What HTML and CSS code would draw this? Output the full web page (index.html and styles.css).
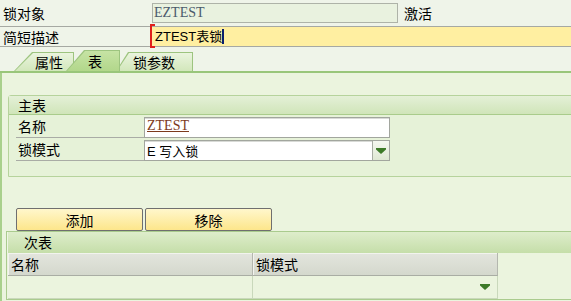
FILE: index.html
```html
<!DOCTYPE html>
<html lang="zh">
<head>
  <meta charset="UTF-8">
  <title>锁对象 EZTEST</title>
  <link rel="stylesheet" href="styles.css">
</head>
<body>
  <!-- Header fields -->
  <div class="row r1">
    <span class="lbl">锁对象</span>
    <span class="field ro">EZTEST</span>
    <span class="status">激活</span>
  </div>
  <div class="row r2">
    <span class="lbl">简短描述</span>
    <span class="field req"><i class="bracket"></i>ZTEST表锁<i class="caret"></i></span>
  </div>

  <!-- Tab strip -->
  <div class="tabs">
    <div class="tab t1"><span>属性</span></div>
    <div class="tab t2 on"><span>表</span></div>
    <div class="tab t3"><span>锁参数</span></div>
  </div>

  <div class="panel">
    <!-- Primary table -->
    <div class="group">
      <div class="ghead">主表</div>
      <div class="gbody">
        <div class="frow">
          <span class="flbl">名称</span>
          <span class="inp link">ZTEST</span>
        </div>
        <div class="frow">
          <span class="flbl">锁模式</span>
          <span class="inp sel">E 写入锁
            <b class="ddbtn"><svg width="10" height="6" viewBox="0 0 10 6"><path d="M0 0h10v1.5L5 6 0 1.5z" fill="#3d7a28"/></svg></b>
          </span>
        </div>
      </div>
    </div>

    <div class="btns">
      <button class="btn">添加</button>
      <button class="btn">移除</button>
    </div>

    <!-- Secondary tables -->
    <div class="group sub">
      <div class="ghead">次表</div>
      <div class="grid">
        <div class="th">名称</div>
        <div class="th">锁模式</div>
        <div class="td"></div>
        <div class="td dd"><svg width="10" height="6" viewBox="0 0 10 6"><path d="M0 0h10v1.5L5 6 0 1.5z" fill="#3d7a28"/></svg></div>
      </div>
    </div>
  </div>
</body>
</html>
```

FILE: styles.css
```css
/* Base */
body {
  margin: 0;
  width: 571px;
  height: 301px;
  overflow: hidden;
  background: #eff4e9;
  font: 14px "Noto Sans CJK SC", sans-serif;
  color: #000;
}

/* Header rows */
.row {
  display: flex;
  align-items: center;
  border-bottom: 1px solid #a6a9a3;
}

.r1 {
  height: 26px;
}

.r2 {
  height: 19px;
}

.lbl {
  width: 150px;
  padding-left: 3px;
  box-sizing: border-box;
}

.field.ro {
  margin-left: 2px;
  width: 246px;
  height: 20px;
  box-sizing: border-box;
  border: 1px solid #aeb3a8;
  background: #e9f2df;
  font: 14px "Liberation Serif", serif;
  color: #4b5b6c;
  line-height: 18px;
  padding-left: 1px;
}

.status {
  margin-left: 6px;
}

.field.req {
  position: relative;
  flex: 1;
  align-self: stretch;
  background: #ffefa1;
  padding-left: 5px;
  font: 13px "Liberation Sans", "Noto Sans CJK SC", sans-serif;
  line-height: 19px;
}

.bracket {
  position: absolute;
  left: 0;
  top: -3px;
  bottom: -2px;
  width: 3px;
  border: 2px solid #e0201c;
  border-right: none;
}

.caret {
  display: inline-block;
  width: 2px;
  height: 15px;
  background: #0c1f6b;
  vertical-align: -3px;
}

/* Tabs */
.tabs {
  display: flex;
  align-items: flex-end;
  height: 24px;
  padding-left: 14px;
  border-bottom: 2px solid #99c67a;
}

.tab {
  position: relative;
  height: 19px;
  padding: 1px 1px 0 1px;
  box-sizing: border-box;
  background: #9dc47f;
  clip-path: polygon(var(--s) 0, 100% 0, 100% 100%, 0 100%);
}

.tab span {
  display: block;
  height: 100%;
  line-height: 18px;
  background: linear-gradient(#eaf4de, #d2e7bb);
  clip-path: polygon(var(--s) 0, 100% 0, 100% 100%, 0 100%);
}

.t1 {
  --s: 18px;
  width: 60px;
}

.t1 span {
  padding-left: 20px;
}

.t2 {
  --s: 18px;
  width: 54px;
  height: 21px;
  margin-left: -8px;
  z-index: 2;
}

.t2 span {
  padding-left: 21px;
  line-height: 20px;
  background: linear-gradient(#c6e3a4, #b2d78b);
}

.t3 {
  --s: 12px;
  width: 77px;
  margin-left: -4px;
}

.t3 span {
  padding-left: 16px;
}

/* Content panel */
.panel {
  height: 228px;
  box-sizing: border-box;
  overflow: hidden;
  border-left: 2px solid #a9d08c;
  background: #ebf4de;
  padding: 22px 0 0 6px;
}

.group {
  width: calc(100% + 10px);
  border: 1px solid #b6d39c;
  border-top-left-radius: 3px;
}

.ghead {
  height: 18px;
  line-height: 18px;
  padding-left: 9px;
  border-bottom: 1px solid #a9cc8b;
  background: linear-gradient(#e4f0d7, #d0e5b9);
}

.gbody {
  background: #e6f2d8;
  padding: 0 0 15px 7px;
}

.frow {
  display: flex;
  height: 23px;
}

.flbl {
  width: 128px;
  height: 100%;
  box-sizing: border-box;
  padding-left: 2px;
  line-height: 22px;
  border-bottom: 1px solid #a9aca5;
}

.inp {
  position: relative;
  margin-top: 2px;
  width: 246px;
  height: 21px;
  box-sizing: border-box;
  border: 1px solid #a2a69e;
  box-shadow: inset 0 1px 0 #d8dad6;
  background: #fff;
  padding-left: 2px;
  line-height: 19px;
}

.inp.link {
  font: 14px "Liberation Serif", serif;
  color: #7d3a1c;
  text-decoration: underline;
}

.inp.sel {
  display: flex;
  font: 13px "Liberation Sans", "Noto Sans CJK SC", sans-serif;
}

.ddbtn {
  margin-left: auto;
  width: 16px;
  height: 19px;
  border-left: 1px solid #a8ada3;
  background: linear-gradient(#f5f8f0, #dfe8d3);
  display: flex;
  align-items: center;
  justify-content: center;
}

/* Buttons */
.btns {
  display: flex;
  gap: 2px;
  margin: 31px 0 0 8px;
}

.btn {
  width: 127px;
  height: 23px;
  padding: 0;
  border: 1px solid #6f6f6f;
  border-radius: 2px;
  background: linear-gradient(#fff7cc, #fde68b);
  font: 14px "Noto Sans CJK SC", sans-serif;
  color: #000;
}

/* Secondary table group */
.group.sub {
  margin-left: -2px;
  border-color: #aacb8e;
  border-radius: 0;
}

.sub .ghead {
  height: 21px;
  line-height: 21px;
  padding-left: 17px;
  border-bottom: none;
  background: linear-gradient(#deedcb, #c5dea9);
  box-shadow: inset 1px 0 0 #eef6e4;
}

.grid {
  display: grid;
  grid-template-columns: 245px 245px;
  padding-left: 1px;
}

.th {
  height: 22px;
  line-height: 22px;
  padding-left: 3px;
  border-right: 1px solid #b4b7ae;
  border-bottom: 1px solid #a9ada4;
  background: linear-gradient(#e3e5dd, #d4d8cd);
  box-shadow: inset 1px 1px 0 #f2f3ee;
}

.td {
  height: 22px;
  border-right: 1px solid #c9d8bb;
  border-bottom: 1px solid #c9d8bb;
}

.td.dd {
  display: flex;
  align-items: center;
  justify-content: flex-end;
  padding-right: 7px;
}
```
